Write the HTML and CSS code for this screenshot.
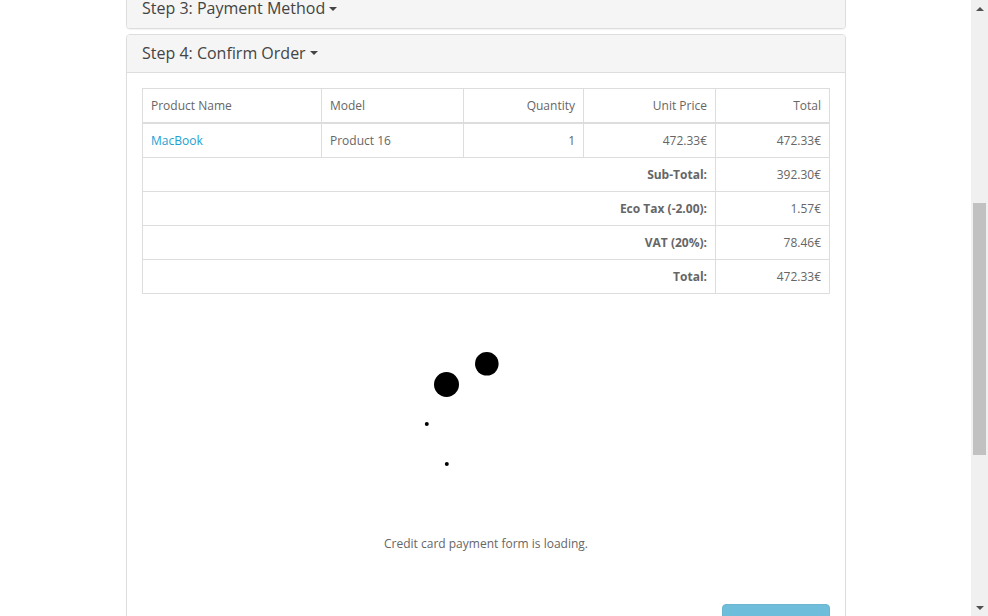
FILE: index.html
```html
<!DOCTYPE html>
<html lang="en">
<head>
<meta charset="utf-8">
<title>Checkout</title>
<link rel="stylesheet" href="styles.css">
</head>
<body>
<div class="page">
  <div class="container">
    <div class="panel-group">
      <div class="panel">
        <div class="panel-heading">
          <h4 class="panel-title">Step 3: Payment Method <span class="caret"></span></h4>
        </div>
      </div>
      <div class="panel">
        <div class="panel-heading open">
          <h4 class="panel-title">Step 4: Confirm Order <span class="caret"></span></h4>
        </div>
        <div class="panel-body">
          <table class="table">
            <thead>
              <tr>
                <th class="c1">Product Name</th>
                <th class="c2">Model</th>
                <th class="c3 r">Quantity</th>
                <th class="c4 r">Unit Price</th>
                <th class="c5 r">Total</th>
              </tr>
            </thead>
            <tbody>
              <tr>
                <td><a href="#">MacBook</a></td>
                <td>Product 16</td>
                <td class="r">1</td>
                <td class="r">472.33€</td>
                <td class="r">472.33€</td>
              </tr>
            </tbody>
            <tfoot>
              <tr><td colspan="4" class="r"><strong>Sub-Total:</strong></td><td class="r">392.30€</td></tr>
              <tr><td colspan="4" class="r"><strong>Eco Tax (-2.00):</strong></td><td class="r">1.57€</td></tr>
              <tr><td colspan="4" class="r"><strong>VAT (20%):</strong></td><td class="r">78.46€</td></tr>
              <tr><td colspan="4" class="r"><strong>Total:</strong></td><td class="r">472.33€</td></tr>
            </tfoot>
          </table>
          <div class="payment">
            <div class="loader">
              <svg width="130" height="120" viewBox="0 0 130 120">
                <circle cx="25.5" cy="34.5" r="12.5" fill="#000"/>
                <circle cx="65.8" cy="13.8" r="11.8" fill="#000"/>
                <circle cx="5.8" cy="74" r="2" fill="#000"/>
                <circle cx="25.8" cy="114" r="2" fill="#000"/>
              </svg>
            </div>
            <p class="loading-text">Credit card payment form is loading.</p>
            <div class="buttons">
              <button class="btn" disabled>Confirm Order</button>
            </div>
          </div>
        </div>
      </div>
    </div>
  </div>
</div>
<div class="scrollbar">
  <div class="arrow up"></div>
  <div class="track"><div class="thumb"></div></div>
  <div class="arrow down"></div>
</div>
</body>
</html>
```

FILE: styles.css
```css
html, body {
  margin: 0;
  padding: 0;
  height: 100%;
  overflow: hidden;
  background: #fff;
}
body {
  font-family: "Open Sans", "DejaVu Sans", sans-serif;
  font-size: 12px;
  line-height: 1.42857;
  color: #666;
}
.page {
  width: 972px;
}
.container {
  width: 720px;
  margin: -11px auto 0;
}
.panel {
  background: #fff;
  border: 1px solid #ddd;
  border-radius: 4px;
  box-shadow: 0 1px 1px rgba(0,0,0,.05);
  overflow: hidden;
}
.panel + .panel {
  margin-top: 5px;
}
.panel-heading {
  background: #f5f5f5;
  padding: 10px 15px;
  color: #333;
}
.panel-heading.open {
  border-bottom: 1px solid #ddd;
}
.panel-title {
  margin: 0;
  font-size: 16px;
  font-weight: 400;
  line-height: 1.1;
  color: #444;
}
.caret {
  display: inline-block;
  width: 0;
  height: 0;
  margin-left: 0;
  vertical-align: middle;
  border-top: 4px solid #444;
  border-left: 4px solid transparent;
  border-right: 4px solid transparent;
  position: relative;
  top: -1px;
}
.panel-body {
  padding: 15px;
}
.table {
  width: 688px;
  border-collapse: collapse;
  border-spacing: 0;
  border: 1px solid #ddd;
  table-layout: fixed;
}
.table th, .table td {
  border: 1px solid #ddd;
  padding: 8px;
  line-height: 17px;
  height: 17px;
  text-align: left;
  vertical-align: top;
  font-weight: 400;
  white-space: nowrap;
}
.table thead th {
  border-bottom-width: 2px;
}
.table .r {
  text-align: right;
}
.c1 { width: 162px; }
.c2 { width: 125px; }
.c3 { width: 103px; }
.c4 { width: 115px; }
.c5 { width: 97px; }
.table a {
  color: #23a1d1;
  text-decoration: none;
}
.table strong {
  font-weight: 700;
  line-height: 17px;
}
.payment {
  padding-top: 56px;
}
.loader {
  display: flex;
  justify-content: center;
}
.loader svg {
  display: block;
}
.loading-text {
  text-align: center;
  margin: 65px 0 0;
}
.buttons {
  display: flex;
  justify-content: flex-end;
  margin-top: 52px;
}
.btn {
  width: 108px;
  height: 34px;
  padding: 8px 12px 6px;
  font-family: "Open Sans", sans-serif;
  font-size: 12px;
  line-height: 18px;
  color: #fff;
  background: #229ac8;
  border: 1px solid #1f90bb;
  border-radius: 4px;
  opacity: .65;
}
.scrollbar {
  position: fixed;
  top: 0;
  right: 0;
  width: 17px;
  height: 100%;
  background: #f0f0f0;
  display: flex;
  flex-direction: column;
}
.arrow {
  height: 17px;
  display: flex;
  align-items: center;
  justify-content: center;
}
.arrow::before {
  content: "";
  width: 0;
  height: 0;
  border-left: 4px solid transparent;
  border-right: 4px solid transparent;
}
.arrow.up::before {
  border-bottom: 4px solid #505050;
}
.arrow.down::before {
  border-top: 4px solid #505050;
}
.track {
  flex: 1;
  padding-top: 186px;
}
.thumb {
  margin: 0 2px;
  height: 252px;
  background: #c1c1c1;
}
```
